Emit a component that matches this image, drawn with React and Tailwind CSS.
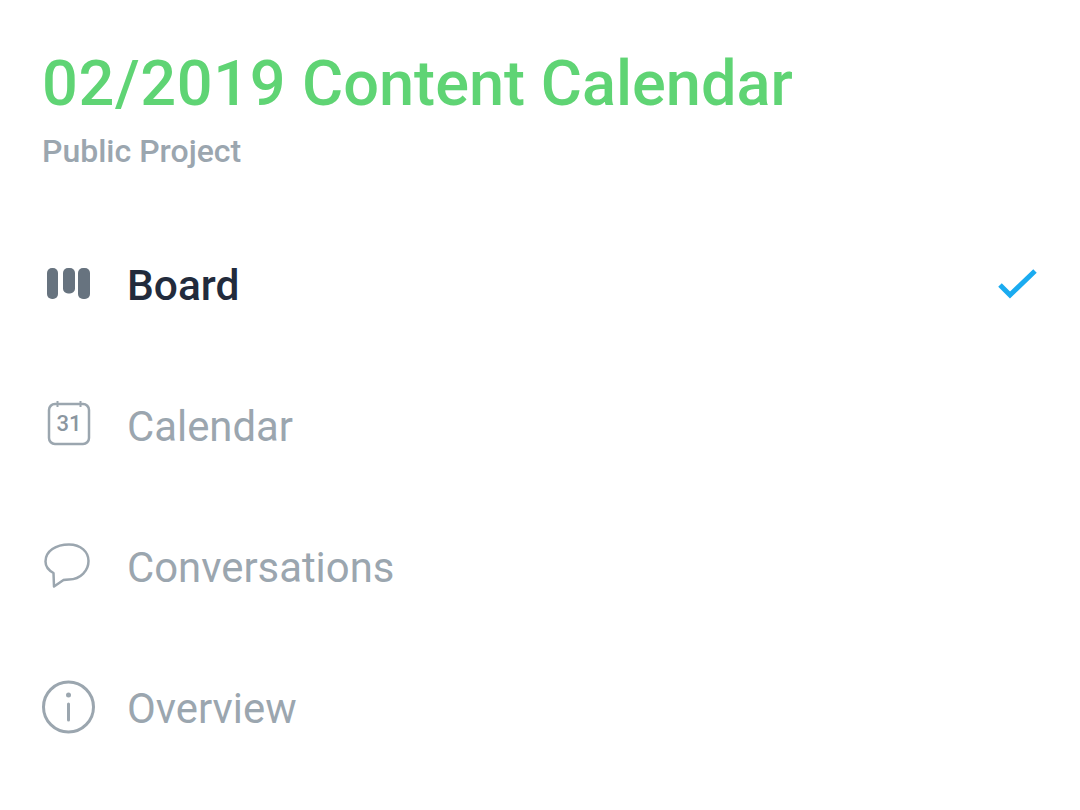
import React from "react";

const rows = [
  { label: "Board", active: true, icon: <BoardIcon /> },
  { label: "Calendar", icon: <CalendarIcon /> },
  { label: "Conversations", icon: <ChatIcon /> },
  { label: "Overview", icon: <InfoIcon /> },
];

function BoardIcon() {
  return (
    <svg width="60" height="60" viewBox="0 0 60 60" fill="#67737f">
      <rect x="7" y="12" width="11" height="31" rx="5" />
      <rect x="23" y="12" width="12" height="25.5" rx="5" />
      <rect x="38" y="12" width="12" height="31" rx="5" />
    </svg>
  );
}

function CalendarIcon() {
  return (
    <svg width="60" height="60" viewBox="0 0 60 60" fill="none" stroke="#9ba6af" strokeWidth="2.5">
      <rect x="9" y="7" width="40" height="40" rx="6" />
      <path d="M17.500 4v6M40.500 4v6" strokeWidth="2" />
      <text x="29" y="34" textAnchor="middle" fontSize="22" fontWeight="500" fill="#8b96a0" stroke="none" fontFamily="Roboto, sans-serif">31</text>
    </svg>
  );
}

function ChatIcon() {
  return (
    <svg width="60" height="60" viewBox="0 0 60 60" fill="none" stroke="#9ba6af" strokeWidth="2.5">
      <path d="M29 6.500C41 6.500 48.500 14 48.500 23S41 41.500 29 41.500c-2 0-4 0-5.500.5L14 48.500 13.500 35C8 32 5.500 28 5.500 23.500 5.500 13 16 6.500 29 6.500Z" strokeLinejoin="round" />
    </svg>
  );
}

function InfoIcon() {
  return (
    <svg width="60" height="60" viewBox="0 0 60 60" fill="none" stroke="#9ba6af" strokeWidth="3">
      <circle cx="28.500" cy="28" r="25" />
      <circle cx="28.500" cy="16" r="2.500" fill="#9ba6af" stroke="none" />
      <path d="M28.500 25v16" strokeLinecap="round" />
    </svg>
  );
}

export default function App() {
  return (
    <div className="min-h-[810px] w-[1080px] bg-white font-['Roboto',sans-serif]">
      <div className="pl-[42px] pt-[48px]">
        <h1 className="text-[63.1px] leading-[70px] font-medium text-[#5fd474]">
          <span className="tracking-[0.65px]">02/2019</span> Content Calendar
        </h1>
        <p className="mt-[15px] text-[32px] leading-[36px] font-medium text-[#9ba6af]">Public Project</p>
      </div>
      <div className="mt-[46px] flex flex-col">
        {rows.map((row) => (
          <div key={row.label} className="flex h-[141px] items-center pl-[40px] pr-[41px]">
            <div className="flex w-[87px] items-center justify-start">{row.icon}</div>
            <span className={row.active ? "text-[42.5px] leading-[50px] font-medium text-[#222b3c]" : "text-[41.85px] leading-[50px] pt-[1px] text-[#9ba6af]"}>{row.label}</span>
            {row.active && (
              <svg className="ml-auto" width="44" height="44" viewBox="0 0 44 44" fill="none" stroke="#1aabf0" strokeWidth="5">
                <path d="M5 21l10 10L40 7" />
              </svg>
            )}
          </div>
        ))}
      </div>
    </div>
  );
}
